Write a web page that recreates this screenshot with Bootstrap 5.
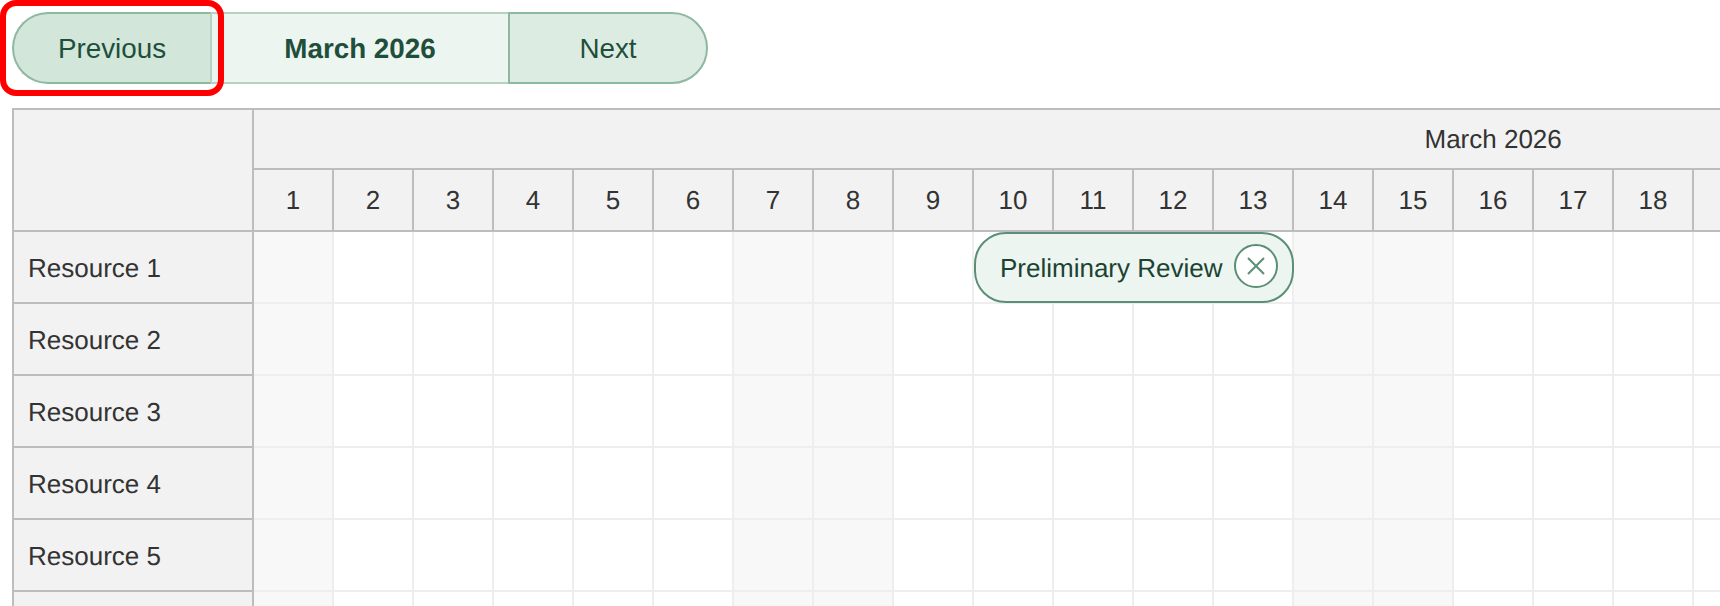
<!DOCTYPE html>
<html lang="en">
<head>
<meta charset="utf-8">
<title>March 2026 schedule</title>
<link href="https://cdn.jsdelivr.net/npm/bootstrap@5.3.0/dist/css/bootstrap.min.css" rel="stylesheet">
<style>
html,body{height:100%;overflow:hidden;background:#fff}
body{font-family:"Liberation Sans",Arial,sans-serif;font-size:26px;color:#333;text-rendering:geometricPrecision}
.pg-wrap{padding:12px;width:max-content}
.pager-box{height:72px;margin-bottom:24px}
.pager-btn{height:72px;border:2px solid #8eb8a3;border-radius:0;font-size:27.8px;line-height:1.2;color:#1f4f3a;padding:2px 0 0;display:flex;align-items:center;justify-content:center}
.pager-prev,.pager-prev:hover{width:200px;background:#d2e6da;color:#1f4f3a;border-color:#8eb8a3;border-right-color:#b5d2c4;border-radius:36px 0 0 36px}
.pager-title{width:296px;background:#ecf5f0;border-color:#b5d2c4;border-left:0;border-right:0;font-weight:700}
.pager-next,.pager-next:hover{width:200px;background:#dcece3;color:#1f4f3a;border-color:#8eb8a3;border-radius:0 36px 36px 0}
.focus-mark{position:absolute;left:0;top:0;width:224px;height:96px;border:6px solid #f00;border-radius:16px;pointer-events:none}
.sched-grid{table-layout:fixed;border-collapse:separate;border-spacing:0;width:2722px;border-top:2px solid #bdbdbd;border-left:2px solid #bdbdbd}
.sched-grid th,.sched-grid td{padding:0;font-weight:400;text-align:center;vertical-align:middle;box-sizing:border-box}
.col-res{width:240px}
.col-day{width:80px}
.col-off{background:#f8f8f8}
.sched-grid thead th{background:#f2f2f2;border-right:2px solid #bdbdbd;border-bottom:2px solid #bdbdbd}
.sched-grid thead th.hd-month{height:60px}
.hd-day{height:62px}
.sched-grid tbody th{background:#f2f2f2;text-align:left;padding:3px 0 0 14px;border-right:2px solid #bdbdbd;border-bottom:2px solid #bdbdbd;height:72px}
.sched-grid tbody td{border-right:2px solid #eee;border-bottom:2px solid #eee;height:72px}
.evt-cell{position:relative}
.evt-pill{position:absolute;left:0;top:0;width:320px;height:71px;background:#ecf5f0;border:2px solid #5a8f75;border-radius:32px;color:#1b4332;white-space:nowrap;padding-left:24px;padding-right:14px}
.evt-label{padding-top:2px}
.evt-close{width:44px;height:44px;padding:0;margin-top:-3px;background:#fff;border:2px solid #5a8f75;border-radius:50%}
.evt-close svg{display:block;margin:auto}
</style>
</head>
<body>
<div class="pg-wrap">
  <div class="pager-box d-flex">
    <button type="button" class="btn pager-btn pager-prev">Previous</button>
    <div class="pager-btn pager-title">March 2026</div>
    <button type="button" class="btn pager-btn pager-next">Next</button>
  </div>
  <div class="focus-mark"></div>
  <table class="sched-grid">
    <colgroup>
      <col class="col-res">
      <col class="col-day col-off"><col class="col-day"><col class="col-day"><col class="col-day"><col class="col-day"><col class="col-day"><col class="col-day col-off"><col class="col-day col-off"><col class="col-day"><col class="col-day"><col class="col-day"><col class="col-day"><col class="col-day"><col class="col-day col-off"><col class="col-day col-off"><col class="col-day"><col class="col-day"><col class="col-day"><col class="col-day"><col class="col-day"><col class="col-day col-off"><col class="col-day col-off"><col class="col-day"><col class="col-day"><col class="col-day"><col class="col-day"><col class="col-day"><col class="col-day col-off"><col class="col-day col-off"><col class="col-day"><col class="col-day">
    </colgroup>
    <thead>
      <tr><th rowspan="2"></th><th colspan="31" class="hd-month">March 2026</th></tr>
      <tr class="hd-day"><th>1</th><th>2</th><th>3</th><th>4</th><th>5</th><th>6</th><th>7</th><th>8</th><th>9</th><th>10</th><th>11</th><th>12</th><th>13</th><th>14</th><th>15</th><th>16</th><th>17</th><th>18</th><th>19</th><th>20</th><th>21</th><th>22</th><th>23</th><th>24</th><th>25</th><th>26</th><th>27</th><th>28</th><th>29</th><th>30</th><th>31</th></tr>
    </thead>
    <tbody>
      <tr><th>Resource 1</th><td></td><td></td><td></td><td></td><td></td><td></td><td></td><td></td><td></td><td class="evt-cell"><div class="evt-pill d-flex align-items-center justify-content-between"><span class="evt-label">Preliminary Review</span><button type="button" class="evt-close d-flex align-items-center" aria-label="Remove"><svg width="20" height="20" viewBox="0 0 20 20"><path d="M2 2 18 18M18 2 2 18" stroke="#5a8f75" stroke-width="2" fill="none"/></svg></button></div></td><td></td><td></td><td></td><td></td><td></td><td></td><td></td><td></td><td></td><td></td><td></td><td></td><td></td><td></td><td></td><td></td><td></td><td></td><td></td><td></td><td></td></tr>
      <tr><th>Resource 2</th><td></td><td></td><td></td><td></td><td></td><td></td><td></td><td></td><td></td><td></td><td></td><td></td><td></td><td></td><td></td><td></td><td></td><td></td><td></td><td></td><td></td><td></td><td></td><td></td><td></td><td></td><td></td><td></td><td></td><td></td><td></td></tr>
      <tr><th>Resource 3</th><td></td><td></td><td></td><td></td><td></td><td></td><td></td><td></td><td></td><td></td><td></td><td></td><td></td><td></td><td></td><td></td><td></td><td></td><td></td><td></td><td></td><td></td><td></td><td></td><td></td><td></td><td></td><td></td><td></td><td></td><td></td></tr>
      <tr><th>Resource 4</th><td></td><td></td><td></td><td></td><td></td><td></td><td></td><td></td><td></td><td></td><td></td><td></td><td></td><td></td><td></td><td></td><td></td><td></td><td></td><td></td><td></td><td></td><td></td><td></td><td></td><td></td><td></td><td></td><td></td><td></td><td></td></tr>
      <tr><th>Resource 5</th><td></td><td></td><td></td><td></td><td></td><td></td><td></td><td></td><td></td><td></td><td></td><td></td><td></td><td></td><td></td><td></td><td></td><td></td><td></td><td></td><td></td><td></td><td></td><td></td><td></td><td></td><td></td><td></td><td></td><td></td><td></td></tr>
      <tr><th>Resource 6</th><td></td><td></td><td></td><td></td><td></td><td></td><td></td><td></td><td></td><td></td><td></td><td></td><td></td><td></td><td></td><td></td><td></td><td></td><td></td><td></td><td></td><td></td><td></td><td></td><td></td><td></td><td></td><td></td><td></td><td></td><td></td></tr>
    </tbody>
  </table>
</div>
<script src="https://cdn.jsdelivr.net/npm/bootstrap@5.3.0/dist/js/bootstrap.bundle.min.js"></script>
</body>
</html>
